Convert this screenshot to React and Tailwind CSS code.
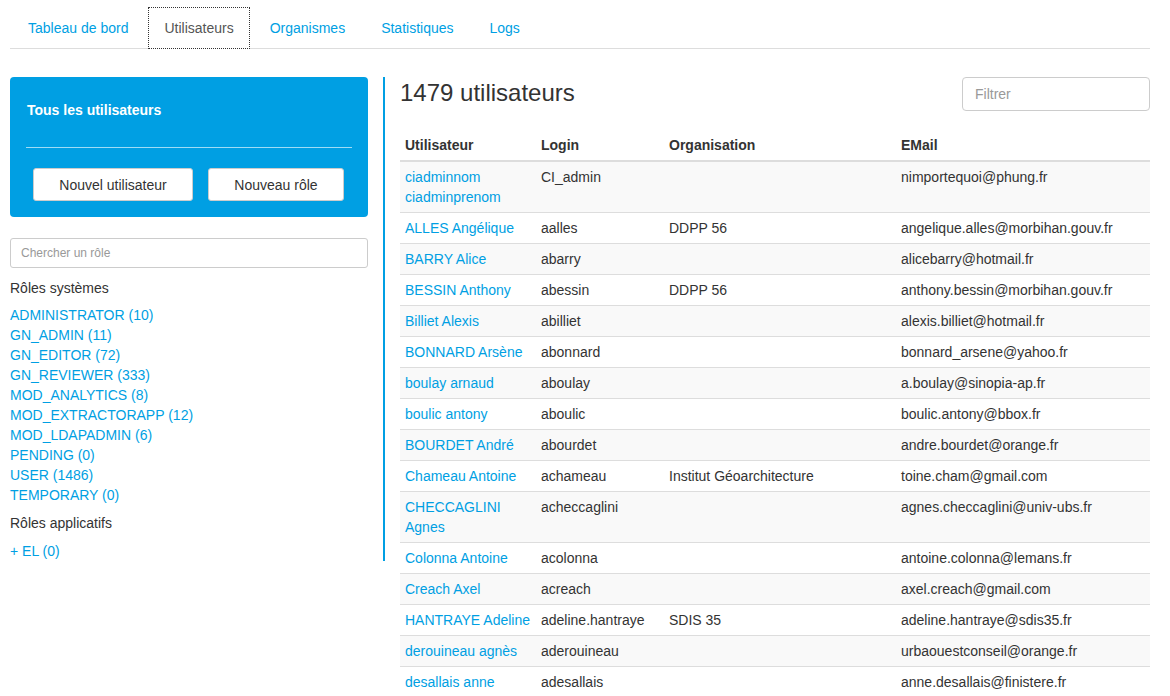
import { useState } from 'react';

const TABS = ['Tableau de bord', 'Utilisateurs', 'Organismes', 'Statistiques', 'Logs'];

const SYSTEM_ROLES = [
  'ADMINISTRATOR (10)',
  'GN_ADMIN (11)',
  'GN_EDITOR (72)',
  'GN_REVIEWER (333)',
  'MOD_ANALYTICS (8)',
  'MOD_EXTRACTORAPP (12)',
  'MOD_LDAPADMIN (6)',
  'PENDING (0)',
  'USER (1486)',
  'TEMPORARY (0)',
];

const USERS = [
  ['ciadminnom ciadminprenom', 'CI_admin', '', 'nimportequoi@phung.fr'],
  ['ALLES Angélique', 'aalles', 'DDPP 56', 'angelique.alles@morbihan.gouv.fr'],
  ['BARRY Alice', 'abarry', '', 'alicebarry@hotmail.fr'],
  ['BESSIN Anthony', 'abessin', 'DDPP 56', 'anthony.bessin@morbihan.gouv.fr'],
  ['Billiet Alexis', 'abilliet', '', 'alexis.billiet@hotmail.fr'],
  ['BONNARD Arsène', 'abonnard', '', 'bonnard_arsene@yahoo.fr'],
  ['boulay arnaud', 'aboulay', '', 'a.boulay@sinopia-ap.fr'],
  ['boulic antony', 'aboulic', '', 'boulic.antony@bbox.fr'],
  ['BOURDET André', 'abourdet', '', 'andre.bourdet@orange.fr'],
  ['Chameau Antoine', 'achameau', 'Institut Géoarchitecture', 'toine.cham@gmail.com'],
  ['CHECCAGLINI Agnes', 'acheccaglini', '', 'agnes.checcaglini@univ-ubs.fr'],
  ['Colonna Antoine', 'acolonna', '', 'antoine.colonna@lemans.fr'],
  ['Creach Axel', 'acreach', '', 'axel.creach@gmail.com'],
  ['HANTRAYE Adeline', 'adeline.hantraye', 'SDIS 35', 'adeline.hantraye@sdis35.fr'],
  ['derouineau agnès', 'aderouineau', '', 'urbaouestconseil@orange.fr'],
  ['desallais anne', 'adesallais', '', 'anne.desallais@finistere.fr'],
];

export default function App() {
  const [active, setActive] = useState('Utilisateurs');
  const [filter, setFilter] = useState('');
  const [roleSearch, setRoleSearch] = useState('');

  return (
    <div className="min-h-screen bg-white pl-[10px] pr-[20px] pt-[7px] text-[14px] leading-[20px] text-[#333] [font-family:'Liberation_Sans',Arial,sans-serif]">
      {/* onglets */}
      <ul className="flex border-b border-[#ddd]">
        {TABS.map((t) => (
          <li key={t} className="mx-[2px] -mb-px">
            <a
              href="#"
              onClick={(e) => {
                e.preventDefault();
                setActive(t);
              }}
              className={`block px-[15px] py-[10px] ${
                active === t
                  ? 'border border-dotted border-[#333] bg-white text-[#555]'
                  : 'border border-transparent text-[#009fe3]'
              }`}
            >
              {t}
            </a>
          </li>
        ))}
      </ul>

      <div className="mt-[28px] flex items-start">
        {/* colonne rôles */}
        <aside className="w-[375px] shrink-0 border-r-2 border-[#009fe3] pr-[15px]">
          <div className="rounded-[4px] bg-[#009fe3] px-[16px] pb-[16px] pt-[23px]">
            <h4 className="pl-px font-bold text-white">Tous les utilisateurs</h4>
            <hr className="mt-[27px] border-t border-[#9fdcf5]" />
            <div className="mt-[20px] flex gap-[15px] px-[7px]">
              <button className="h-[33px] w-[160px] rounded-[3px] border border-[#ccc] bg-white text-[#333]">
                Nouvel utilisateur
              </button>
              <button className="h-[33px] w-[136px] rounded-[3px] border border-[#ccc] bg-white text-[#333]">
                Nouveau rôle
              </button>
            </div>
          </div>

          <input
            value={roleSearch}
            onChange={(e) => setRoleSearch(e.target.value)}
            placeholder="Chercher un rôle"
            className="mt-[21px] h-[30px] w-full rounded-[3px] border border-[#ccc] px-[10px] text-[12px] placeholder:text-[#999] focus:outline-none"
          />

          <h5 className="mt-[10px]">Rôles systèmes</h5>
          <ul className="mt-[7px]">
            {SYSTEM_ROLES.map((r) => (
              <li key={r}>
                <a href="#" className="text-[#009fe3]">
                  {r}
                </a>
              </li>
            ))}
          </ul>
          <h5 className="mt-[8px]">Rôles applicatifs</h5>
          <ul className="mt-[8px]">
            <li>
              <a href="#" className="text-[#009fe3]">
                + EL (0)
              </a>
            </li>
          </ul>
        </aside>

        {/* liste des utilisateurs */}
        <main className="min-w-0 flex-1 pl-[15px]">
          <div className="flex h-[34px] items-center justify-between">
            <h2 className="-mt-[2px] text-[24px] leading-[26px]">1479 utilisateurs</h2>
            <input
              value={filter}
              onChange={(e) => setFilter(e.target.value)}
              placeholder="Filtrer"
              className="h-[34px] w-[188px] rounded-[4px] border border-[#ccc] px-[12px] placeholder:text-[#999] focus:outline-none"
            />
          </div>

          <table className="mt-[19px] w-full table-fixed border-collapse">
            <colgroup>
              <col className="w-[136px]" />
              <col className="w-[128px]" />
              <col className="w-[232px]" />
              <col />
            </colgroup>
            <thead>
              <tr className="border-b-2 border-[#ddd] text-left">
                <th className="p-[5px] font-bold">Utilisateur</th>
                <th className="p-[5px] font-bold">Login</th>
                <th className="p-[5px] font-bold">Organisation</th>
                <th className="p-[5px] font-bold">EMail</th>
              </tr>
            </thead>
            <tbody>
              {USERS.map((u, i) => (
                <tr key={u[1]} className={`border-b border-[#ddd] align-top ${i % 2 === 0 ? 'bg-[#f9f9f9]' : 'bg-white'}`}>
                  <td className="p-[5px]">
                    <a href="#" className="text-[#009fe3]">
                      {u[0]}
                    </a>
                  </td>
                  <td className="p-[5px]">{u[1]}</td>
                  <td className="p-[5px]">{u[2]}</td>
                  <td className="p-[5px]">{u[3]}</td>
                </tr>
              ))}
            </tbody>
          </table>
        </main>
      </div>
    </div>
  );
}
